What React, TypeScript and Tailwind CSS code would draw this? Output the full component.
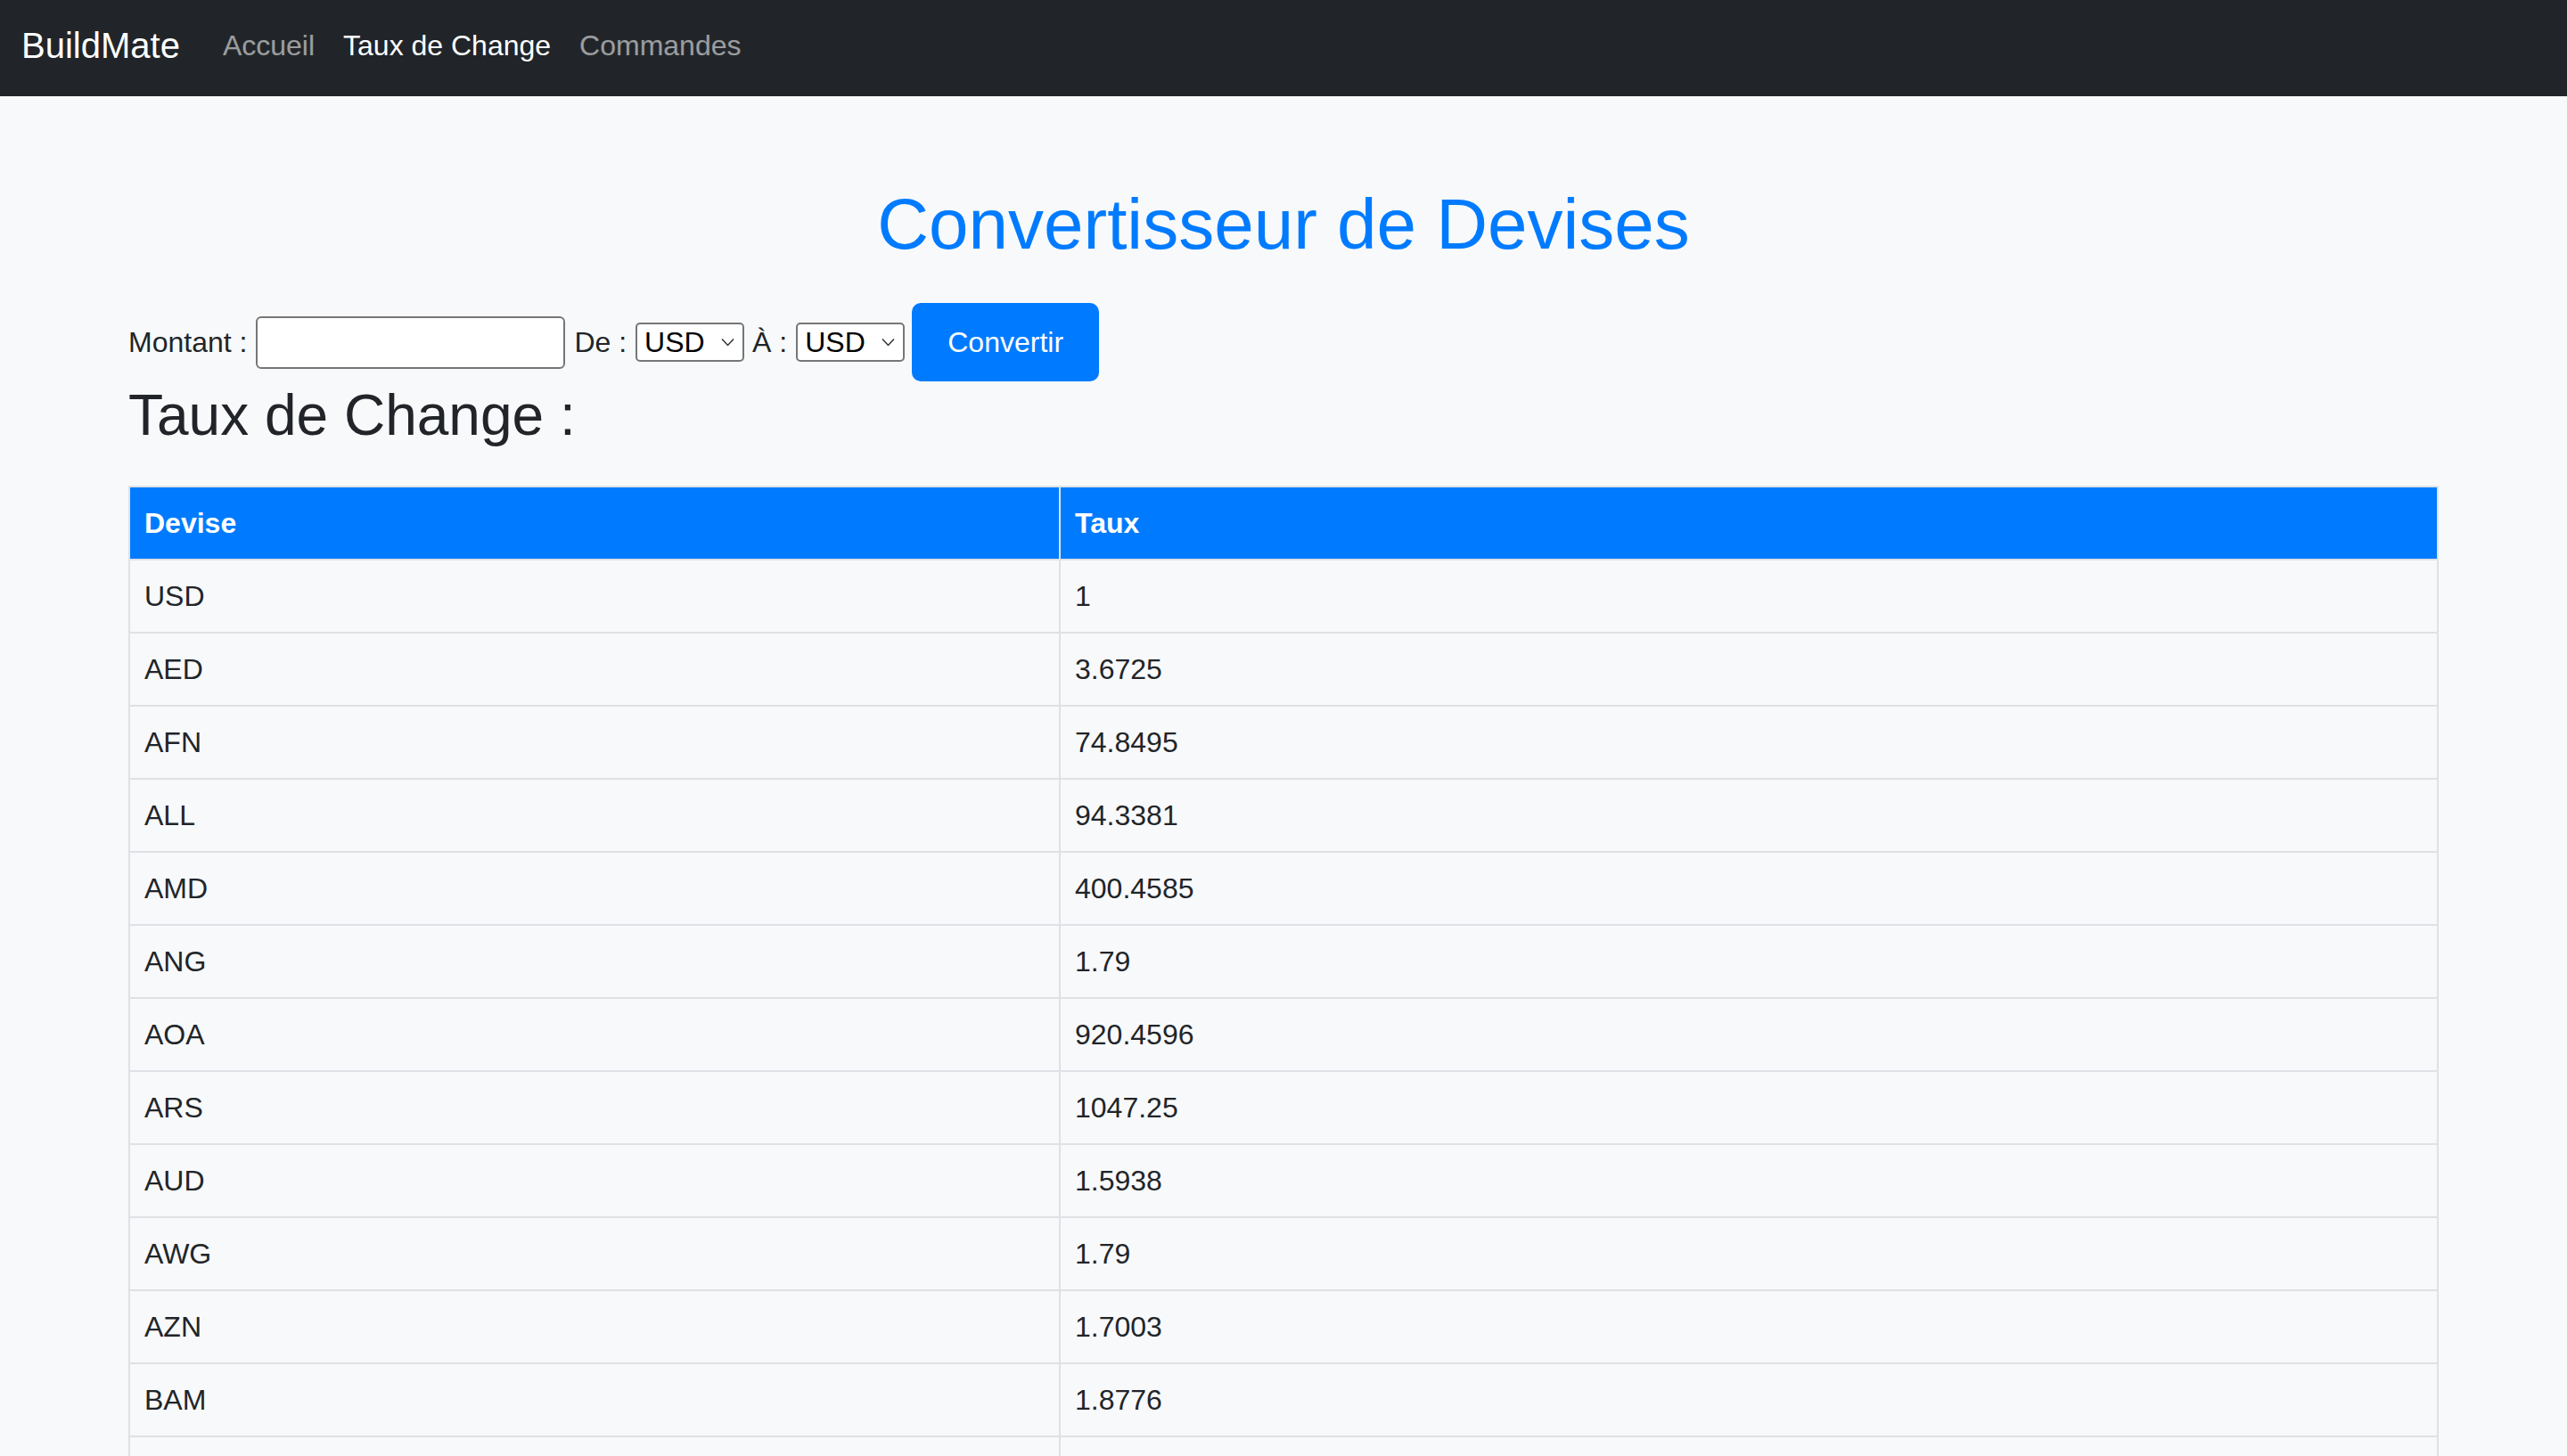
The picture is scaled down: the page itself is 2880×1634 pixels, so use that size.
import { useState } from "react";

const rates: [string, string][] = [
  ["USD", "1"],
  ["AED", "3.6725"],
  ["AFN", "74.8495"],
  ["ALL", "94.3381"],
  ["AMD", "400.4585"],
  ["ANG", "1.79"],
  ["AOA", "920.4596"],
  ["ARS", "1047.25"],
  ["AUD", "1.5938"],
  ["AWG", "1.79"],
  ["AZN", "1.7003"],
  ["BAM", "1.8776"],
  ["BBD", "2"],
];

const navLink = "px-4 text-[32px] leading-[48px]";

function Chevron() {
  return (
    <svg
      width="15"
      height="9"
      viewBox="0 0 15 9"
      className="pointer-events-none absolute right-[11px] top-1/2 -translate-y-1/2"
      fill="none"
    >
      <path d="M1 1 L7.5 8 L14 1" stroke="#333" strokeWidth="1.5" />
    </svg>
  );
}

function CurrencySelect({ value, onChange }: { value: string; onChange: (v: string) => void }) {
  return (
    <span className="relative inline-block">
      <select
        value={value}
        onChange={(e) => onChange(e.target.value)}
        className="h-[44px] w-[122px] appearance-none rounded-[5px] border-2 border-[#767676] bg-white pl-[8px] text-[32px] leading-[40px] text-black"
      >
        {rates.map(([code]) => (
          <option key={code} value={code}>
            {code}
          </option>
        ))}
      </select>
      <Chevron />
    </span>
  );
}

export default function App() {
  const [amount, setAmount] = useState("");
  const [from, setFrom] = useState("USD");
  const [to, setTo] = useState("USD");

  return (
    <div className="min-h-screen bg-[#f8f9fa] font-['Liberation_Sans',Arial,sans-serif] text-[#212529]">
      {/* Navbar */}
      <nav className="flex h-[108px] items-center bg-[#212529] px-6 pb-[6px]">
        <span className="mr-8 text-[40px] leading-[60px] text-white">BuildMate</span>
        <a className={`${navLink} text-white/55`}>Accueil</a>
        <a className={`${navLink} text-white`}>Taux de Change</a>
        <a className={`${navLink} text-white/55`}>Commandes</a>
      </nav>

      <main className="mx-auto w-[2592px] pt-[96px]">
        <h1 className="mb-[40px] text-center text-[80px] leading-[96px] text-[#007bff]">
          Convertisseur de Devises
        </h1>

        <div className="flex items-center text-[32px] leading-[48px]">
          <label className="mr-[10px]">Montant :</label>
          <input
            type="text"
            value={amount}
            onChange={(e) => setAmount(e.target.value)}
            className="h-[59px] w-[347px] rounded-[6px] border-2 border-[#767676] bg-white px-2 text-[32px]"
          />
          <label className="ml-[10px] mr-[10px]">De :</label>
          <CurrencySelect value={from} onChange={setFrom} />
          <label className="ml-[9px] mr-[10px]">À :</label>
          <CurrencySelect value={to} onChange={setTo} />
          <button className="ml-[8px] h-[88px] rounded-[10px] bg-[#007bff] px-[40px] text-[32px] leading-[48px] text-white">
            Convertir
          </button>
        </div>

        <h2 className="mb-[40px] text-[64px] leading-[1.2] text-[#212529]">Taux de Change :</h2>

        <table className="w-full table-fixed border-collapse text-left text-[32px] leading-[48px]">
          <thead>
            <tr className="bg-[#007bff] text-white">
              <th className="w-[1044px] border-2 border-[#dee2e6] px-4 py-4 font-bold">Devise</th>
              <th className="border-2 border-[#dee2e6] px-4 py-4 font-bold">Taux</th>
            </tr>
          </thead>
          <tbody>
            {rates.map(([code, rate]) => (
              <tr key={code}>
                <td className="border-2 border-[#dee2e6] px-4 py-4">{code}</td>
                <td className="border-2 border-[#dee2e6] px-4 py-4">{rate}</td>
              </tr>
            ))}
          </tbody>
        </table>
      </main>
    </div>
  );
}
